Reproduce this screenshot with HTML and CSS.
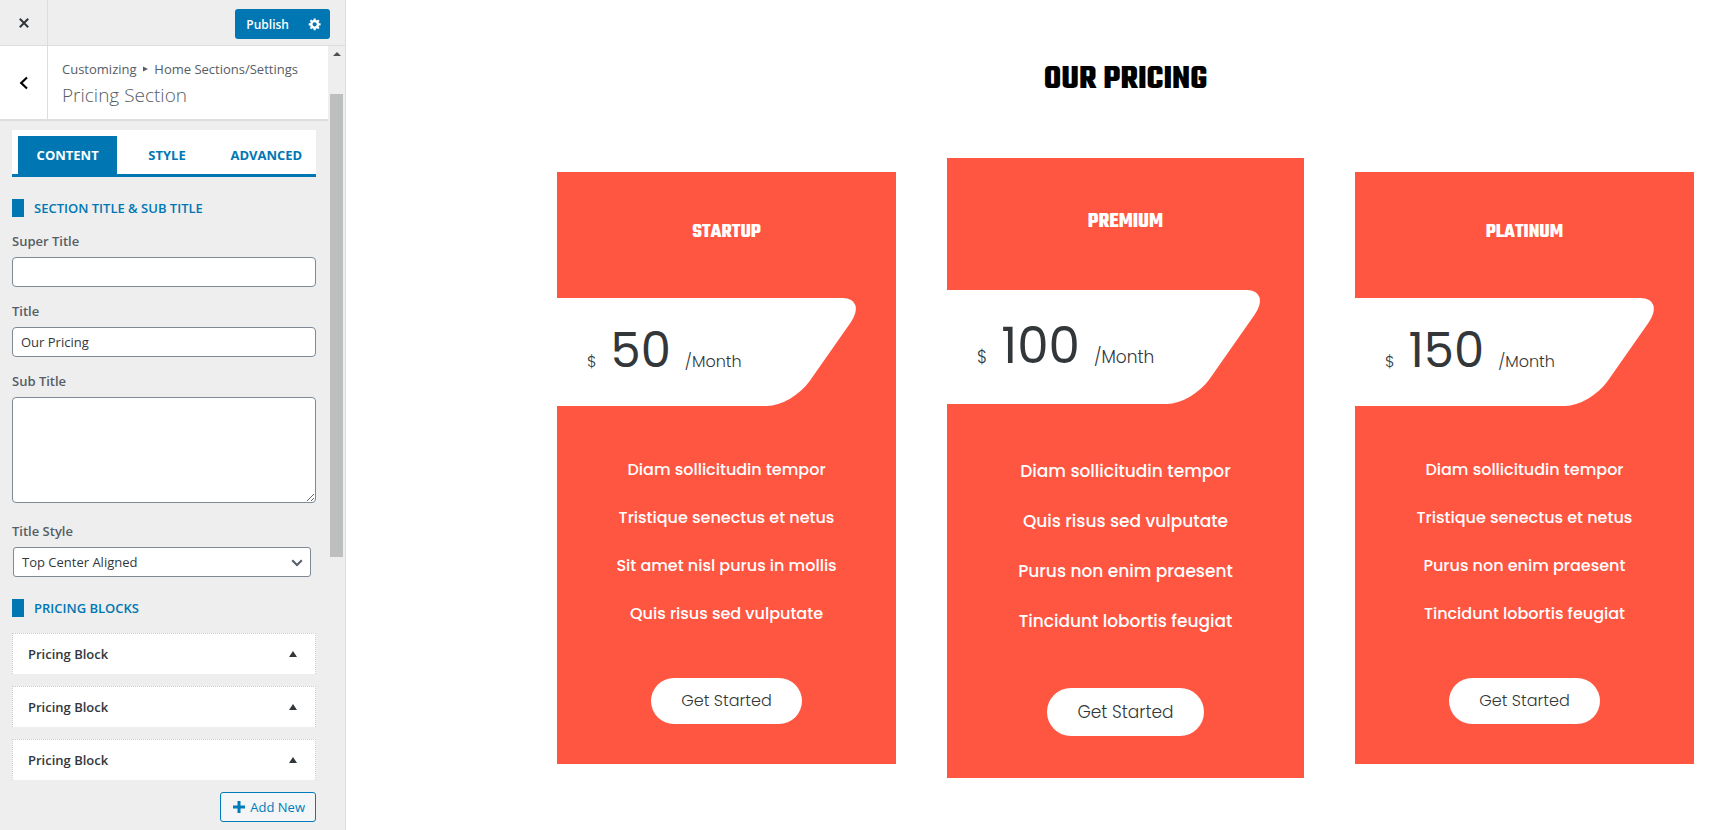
FILE: index.html
```html
<!DOCTYPE html>
<html lang="en">
<head>
    <meta charset="UTF-8">
    <meta name="viewport" content="width=device-width, initial-scale=1.0">
    <title>Customize: Pricing Section</title>
    <link rel="stylesheet" href="styles.css">
</head>
<body>
    <!-- Customizer Sidebar -->
    <aside class="sidebar">
        <div class="topbar">
            <a href="#" class="close-link" aria-label="Close">
                <svg width="12" height="12" viewBox="0 0 12 12"><path d="M1.8 1.8l8.4 8.4M10.2 1.8L1.8 10.2" fill="none" stroke="#32373c" stroke-width="2"/></svg>
            </a>
            <div class="publish">
                <button type="button" class="publish-btn">Publish</button>
                <button type="button" class="publish-settings" aria-label="Publish Settings">
                    <svg width="14" height="14" viewBox="0 0 20 20"><path fill="#fff" d="M18 12h-2.18c-.17.7-.44 1.35-.81 1.93l1.54 1.54-2.1 2.1-1.54-1.54c-.58.36-1.23.63-1.91.79V19H8v-2.18c-.68-.16-1.33-.43-1.91-.79l-1.54 1.54-2.12-2.12 1.54-1.54c-.36-.58-.63-1.23-.79-1.91H1V9.03h2.17c.16-.7.44-1.35.8-1.94L2.43 5.55l2.1-2.1 1.54 1.54c.58-.37 1.24-.64 1.93-.81V2h3v2.18c.68.16 1.33.43 1.91.79l1.54-1.54 2.12 2.12-1.54 1.54c.36.59.64 1.24.8 1.94H18V12zm-8.5 1.5c1.66 0 3-1.34 3-3s-1.34-3-3-3-3 1.34-3 3 1.34 3 3 3z"/></svg>
                </button>
            </div>
        </div>

        <div class="panel">
            <div class="panel-main">
                <div class="section-header">
                    <button type="button" class="back-btn" aria-label="Back">
                        <svg width="10" height="14" viewBox="0 0 10 14"><path d="M8 1.5L2.2 7 8 12.5" fill="none" stroke="#000" stroke-width="2.2"/></svg>
                    </button>
                    <div class="section-title">
                        <span class="breadcrumb">Customizing <svg class="crumb-arrow" width="5" height="6" viewBox="0 0 5 6"><path d="M0 0.5L5 3 0 5.5z" fill="#555d66"/></svg> Home Sections/Settings</span>
                        <h3>Pricing Section</h3>
                    </div>
                </div>

                <div class="controls">
                    <div class="tabs">
                        <button type="button" class="tab active">CONTENT</button>
                        <button type="button" class="tab">STYLE</button>
                        <button type="button" class="tab">ADVANCED</button>
                    </div>

                    <h4 class="group-title">SECTION TITLE &amp; SUB TITLE</h4>
                    <div class="field">
                        <label for="superTitle">Super Title</label>
                        <input type="text" id="superTitle">
                    </div>
                    <div class="field">
                        <label for="title">Title</label>
                        <input type="text" id="title" value="Our Pricing">
                    </div>
                    <div class="field">
                        <label for="subTitle">Sub Title</label>
                        <textarea id="subTitle"></textarea>
                    </div>
                    <div class="field field-select">
                        <label for="titleStyle">Title Style</label>
                        <div class="select-wrap">
                            <select id="titleStyle">
                                <option>Top Center Aligned</option>
                            </select>
                            <svg class="select-arrow" width="12" height="8" viewBox="0 0 12 8"><path d="M1.2 1.2L6 6l4.800-4.800" fill="none" stroke="#555d66" stroke-width="2"/></svg>
                        </div>
                    </div>

                    <h4 class="group-title">PRICING BLOCKS</h4>
                    <div class="blocks">
                        <button type="button" class="block">Pricing Block <span class="block-arrow"></span></button>
                        <button type="button" class="block">Pricing Block <span class="block-arrow"></span></button>
                        <button type="button" class="block">Pricing Block <span class="block-arrow"></span></button>
                    </div>
                    <button type="button" class="add-btn">
                        <svg width="12" height="12" viewBox="0 0 12 12"><path d="M6 0v12M0 6h12" stroke="#007cba" stroke-width="3"/></svg>
                        Add New
                    </button>
                </div>
            </div>
            <div class="scrollbar">
                <span class="scroll-up"></span>
                <span class="scroll-thumb"></span>
            </div>
        </div>
    </aside>

    <!-- Pricing Preview -->
    <main class="preview">
        <h1>OUR PRICING</h1>
        <div class="cards">
            <section class="card">
                <h2>STARTUP</h2>
                <div class="price"><span>$</span><strong>50</strong><span>/Month</span></div>
                <ul>
                    <li>Diam sollicitudin tempor</li>
                    <li>Tristique senectus et netus</li>
                    <li>Sit amet nisl purus in mollis</li>
                    <li>Quis risus sed vulputate</li>
                </ul>
                <a href="#" class="start-btn">Get Started</a>
            </section>
            <section class="card featured">
                <h2>PREMIUM</h2>
                <div class="price"><span>$</span><strong>100</strong><span>/Month</span></div>
                <ul>
                    <li>Diam sollicitudin tempor</li>
                    <li>Quis risus sed vulputate</li>
                    <li>Purus non enim praesent</li>
                    <li>Tincidunt lobortis feugiat</li>
                </ul>
                <a href="#" class="start-btn">Get Started</a>
            </section>
            <section class="card">
                <h2>PLATINUM</h2>
                <div class="price"><span>$</span><strong>150</strong><span>/Month</span></div>
                <ul>
                    <li>Diam sollicitudin tempor</li>
                    <li>Tristique senectus et netus</li>
                    <li>Purus non enim praesent</li>
                    <li>Tincidunt lobortis feugiat</li>
                </ul>
                <a href="#" class="start-btn">Get Started</a>
            </section>
        </div>
    </main>
</body>
</html>
```

FILE: styles.css
```css
* {
    margin: 0;
    padding: 0;
    box-sizing: border-box;
}

body {
    display: flex;
    min-height: 100vh;
    background: #fff;
    font-family: 'Segoe UI', 'Open Sans', sans-serif;
    font-size: 13px;
    color: #555d66;
}

button, input, select, textarea {
    font: inherit;
}

button {
    border: none;
    cursor: pointer;
}

/* Sidebar */
.sidebar {
    display: flex;
    flex-direction: column;
    flex: none;
    width: 346px;
    background: #eee;
    border-right: 1px solid #ddd;
}

.topbar {
    display: flex;
    justify-content: space-between;
    align-items: center;
    height: 46px;
    padding-right: 15px;
    border-bottom: 1px solid #ddd;
}

.close-link {
    display: flex;
    align-items: center;
    justify-content: center;
    align-self: stretch;
    width: 48px;
    border-right: 1px solid #ddd;
}

.publish {
    display: flex;
    height: 30px;
    margin-top: 3px;
    border-radius: 3px;
    overflow: hidden;
}

.publish-btn, .publish-settings {
    background: #0077b3;
    color: #fff;
}

.publish-btn {
    padding: 0 11px;
    font-weight: 600;
    font-size: 12px;
}

.publish-settings {
    display: flex;
    align-items: center;
    justify-content: center;
    width: 30px;
}

.panel {
    display: flex;
    flex: 1;
}

.panel-main {
    flex: 1;
}

.section-header {
    display: flex;
    height: 75px;
    background: #fff;
    border-bottom: 2px solid #ddd;
}

.back-btn {
    display: flex;
    align-items: center;
    justify-content: center;
    width: 48px;
    background: #fff;
    border-right: 1px solid #ddd;
}

.section-title {
    padding: 12px 0 0 14px;
}

.breadcrumb {
    display: block;
    line-height: 22px;
}

.crumb-arrow {
    margin: 0 3px 2px;
}

.section-title h3 {
    font-size: 19px;
    line-height: 30px;
    font-weight: 300;
}

.controls {
    display: flex;
    flex-direction: column;
    padding: 9px 12px 8px;
}

/* Tabs */
.tabs {
    display: flex;
    height: 47px;
    padding: 6px 0 0 6px;
    background: #fff;
    border-bottom: 3px solid #0077b3;
}

.tab {
    flex: 1;
    background: #fff;
    color: #0077b3;
    font-weight: 700;
}

.tab.active {
    background: #0077b3;
    color: #fff;
}

.group-title {
    margin: 22px 0 14px;
    padding-left: 10px;
    border-left: 12px solid #0077b3;
    color: #0077b3;
    font-size: 13px;
    line-height: 18px;
    font-weight: 600;
}

/* Fields */
.field {
    display: flex;
    flex-direction: column;
    margin-bottom: 14px;
}

.field label {
    margin-bottom: 6px;
    line-height: 20px;
    font-weight: 600;
}

.field input, .field textarea, .field select {
    width: 100%;
    height: 30px;
    padding: 0 8px;
    background: #fff;
    border: 1px solid #7e8993;
    border-radius: 4px;
    color: #32373c;
}

.field textarea {
    height: 106px;
    resize: vertical;
}

.field-select {
    margin: 4px 0 0;
}

.select-wrap {
    position: relative;
    margin: 0 5px 0 1px;
}

.field select {
    appearance: none;
    border-radius: 3px;
}

.select-arrow {
    position: absolute;
    top: 12px;
    right: 8px;
    pointer-events: none;
}

/* Pricing Blocks */
.blocks {
    display: flex;
    flex-direction: column;
    gap: 12px;
    margin-top: 2px;
}

.block {
    display: flex;
    justify-content: space-between;
    align-items: center;
    height: 41px;
    padding: 0 18px 0 15px;
    background: #fff;
    border: 1px dotted #ccc;
    border-bottom: none;
    color: #32373c;
    font-weight: 600;
}

.block-arrow {
    border: 4px solid transparent;
    border-top: none;
    border-bottom: 6px solid #32373c;
}

.add-btn {
    display: flex;
    align-items: center;
    align-self: flex-end;
    gap: 5px;
    height: 30px;
    margin-top: 12px;
    padding: 0 10px 0 12px;
    background: #f3f5f6;
    border: 1px solid #007cba;
    border-radius: 3px;
    color: #007cba;
}

/* Scrollbar */
.scrollbar {
    display: flex;
    flex-direction: column;
    align-items: center;
    width: 17px;
}

.scroll-up {
    margin: 6px 0 38px;
    border: 4px solid transparent;
    border-top: none;
    border-bottom: 4px solid #505050;
}

.scroll-thumb {
    width: 13px;
    height: 59%;
    background: #bdbfbe;
}

/* Preview */
.preview {
    flex: 1;
    padding: 50px 26px 50px 211px;
    font-family: 'Poppins', 'Inter', sans-serif;
    color: #333739;
}

.preview h1, .card h2 {
    font-family: 'Teko', 'Liberation Sans Narrow', 'Arial Narrow', sans-serif;
    text-align: center;
}

.preview h1 {
    margin-bottom: 48px;
    font-size: 34px;
    line-height: 60px;
    font-weight: 700;
    color: #000;
}

.cards {
    display: grid;
    grid-template-columns: 19fr 20fr 19fr;
    align-items: center;
    gap: 51px;
}

.card {
    display: flex;
    flex-direction: column;
    align-items: center;
    padding: 46px 0 40px;
    background: #ff5642;
    overflow: hidden;
    font-size: 16px;
}

.card h2 {
    margin-bottom: 50px;
    font-size: 20px;
    line-height: 30px;
    color: #fff;
}

.price {
    position: relative;
    z-index: 0;
    display: flex;
    align-items: baseline;
    gap: 14px;
    width: 100%;
    height: 108px;
    padding: 23px 0 0 30px;
    line-height: 60px;
    font-weight: 300;
}

/* slanted white band behind the price */
.price::before {
    content: '';
    position: absolute;
    z-index: -1;
    top: 0;
    bottom: 0;
    left: -60px;
    right: 66px;
    background: #fff;
    border-radius: 0 25px 25px 0;
    transform: skewX(-35deg);
}

.price strong {
    font-size: 48px;
    font-weight: 400;
}

.card ul {
    margin: 40px 0;
    list-style: none;
    text-align: center;
    color: #fff;
    font-weight: 500;
}

.card li {
    line-height: 48px;
}

.start-btn {
    padding: 0 30px;
    border-radius: 23px;
    background: #fff;
    color: #333739;
    line-height: 46px;
    font-weight: 300;
    text-decoration: none;
}

/* Featured card */
.featured {
    padding: 48px 0 42px;
    font-size: 17px;
}

.featured h2 {
    margin-bottom: 52px;
    font-size: 21px;
    line-height: 32px;
}

.featured .price {
    height: 114px;
    padding-top: 26px;
}

.featured .price::before {
    right: 72px;
}

.featured .price strong {
    font-size: 50px;
}

.featured ul {
    margin: 42px 0;
}

.featured li {
    line-height: 50px;
}

.featured .start-btn {
    border-radius: 24px;
    line-height: 48px;
}
```
